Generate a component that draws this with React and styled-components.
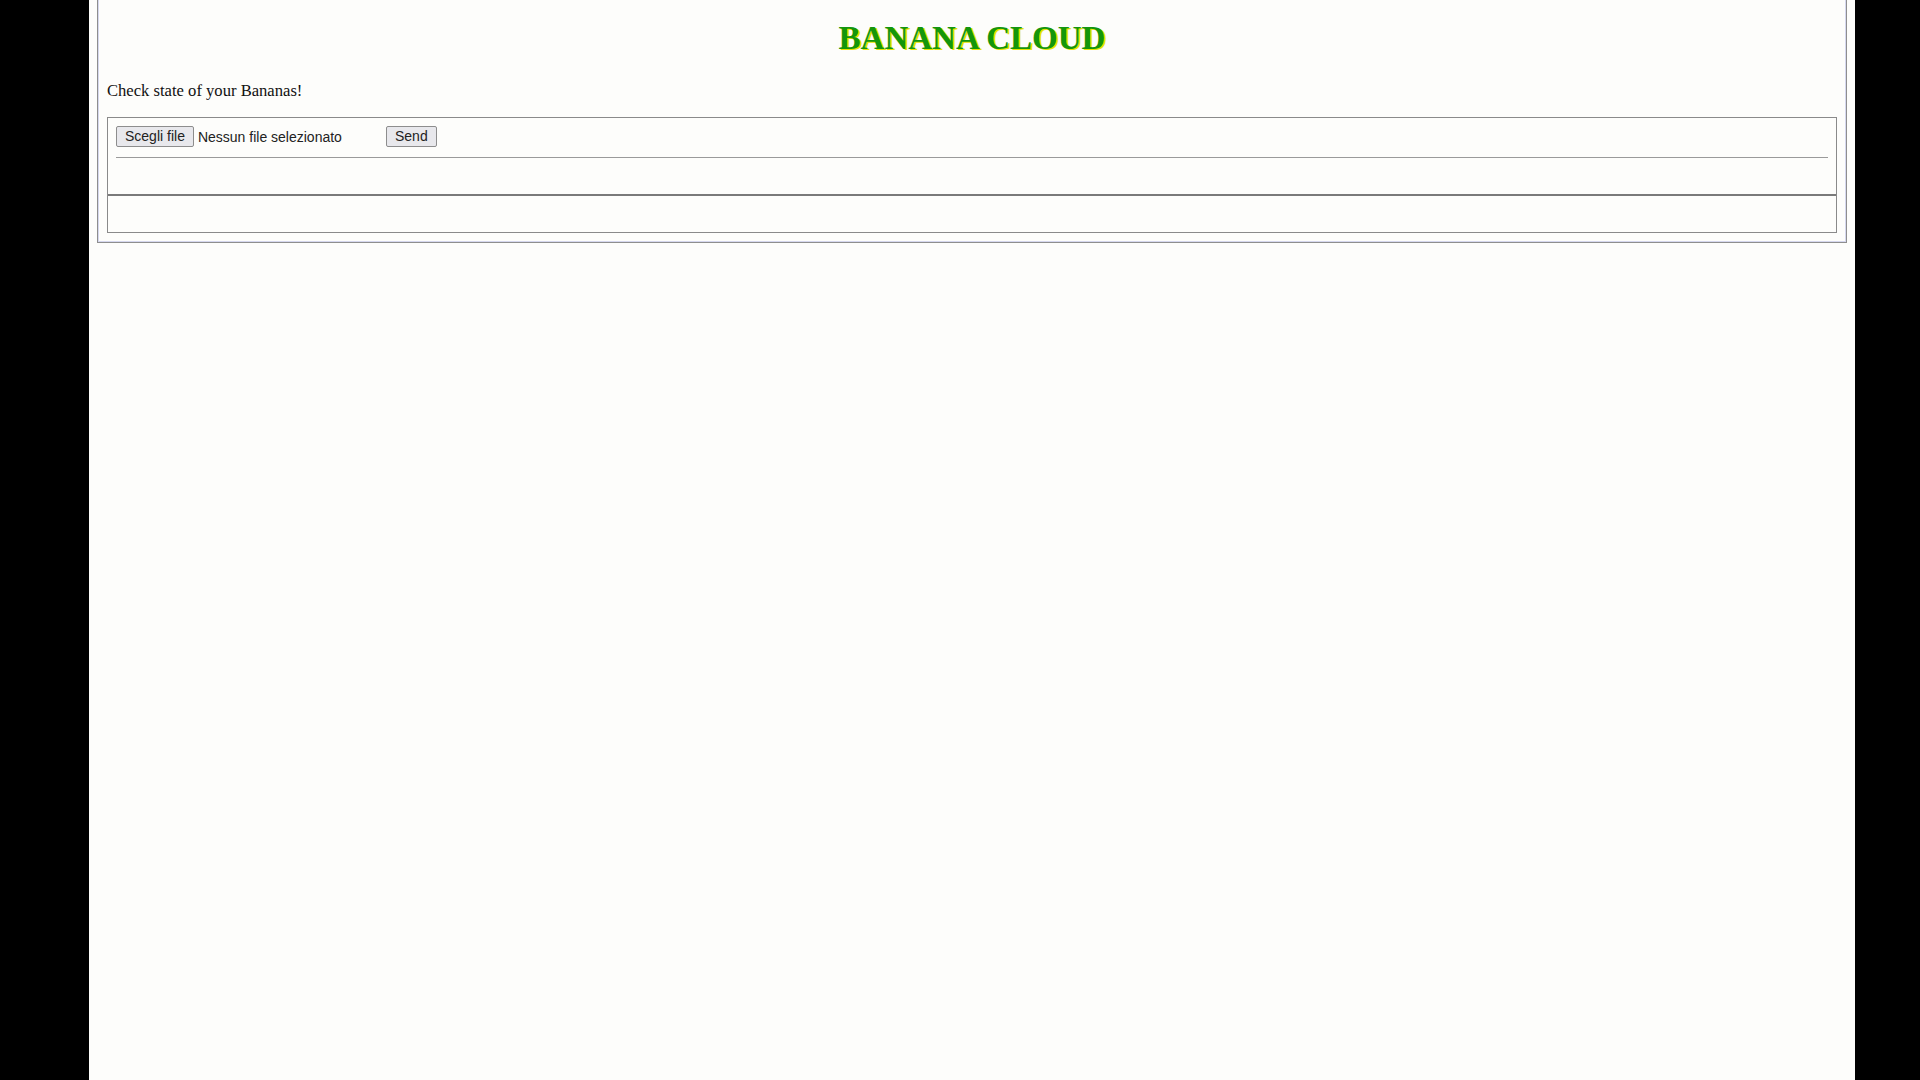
import styled, { createGlobalStyle } from "styled-components";

const GlobalStyle = createGlobalStyle`
    html, body {
        margin: 0;
        padding: 0;
        background: #000;
    }

    #root {
        min-height: 100vh;
    }
`;

const App = () => {
    return (
        <Page>
            <GlobalStyle />
            <Frame>
                <Title>BANANA CLOUD</Title>
                <Intro>Check state of your Bananas!</Intro>

                <Panel>
                    <UploadSection>
                        <UploadRow>
                            <FilePicker>
                                <Button>Scegli file</Button>
                                <FileName>Nessun file selezionato</FileName>
                            </FilePicker>
                            <Button>Send</Button>
                        </UploadRow>
                        <Rule />
                    </UploadSection>
                    <ResultSection />
                </Panel>
            </Frame>
        </Page>
    );
}

export default App;

const Page = styled.div`
    width: 1766px;
    min-height: 100vh;
    margin-left: 89px;
    background-color: #fdfdfb;
    font-family: "Liberation Serif", "Times New Roman", serif;
    color: #111;
    overflow: hidden;
`;

const Frame = styled.div`
    margin: 0 8px;
    padding: 18px 9px 9px;
    border: 1px solid #8e8e8e;
    border-top: none;
    box-shadow: inset 1px 0 0 #d6d8ee, inset -1px 0 0 #d6d8ee, inset 0 -1px 0 #d6d8ee;
`;

const Title = styled.h1`
    margin: 0;
    height: 40px;
    font-size: 33px;
    line-height: 40px;
    font-weight: 700;
    text-align: center;
    color: #14960c;
    text-shadow: 2px 1px 0 #e6e400;
`;

const Intro = styled.p`
    margin: 24px 0 17px;
    font-size: 16.6px;
    line-height: 18px;
`;

const Panel = styled.div`
    border: 1px solid #8a8a8a;
    display: flex;
    flex-direction: column;
`;

const UploadSection = styled.div`
    padding: 8px 8px 0;
    height: 78px;
    box-sizing: border-box;
    border-bottom: 2px solid #7a7a7a;
`;

const UploadRow = styled.div`
    display: flex;
    align-items: center;
    height: 21px;
`;

const FilePicker = styled.div`
    width: 270px;
    display: flex;
    align-items: center;
    gap: 4px;
`;

const Button = styled.button`
    height: 21px;
    padding: 0 8px;
    border: 1px solid #8d8d8d;
    border-radius: 2px;
    background-color: #e8e8ec;
    font-family: "Liberation Sans", Arial, sans-serif;
    font-size: 14px;
    line-height: 19px;
    color: #222;
    cursor: pointer;
`;

const FileName = styled.span`
    font-family: "Liberation Sans", Arial, sans-serif;
    font-size: 14px;
    color: #222;
    white-space: nowrap;
`;

const Rule = styled.div`
    margin-top: 10px;
    height: 1px;
    background-color: #9a9a9a;
`;

const ResultSection = styled.div`
    height: 36px;
`;
